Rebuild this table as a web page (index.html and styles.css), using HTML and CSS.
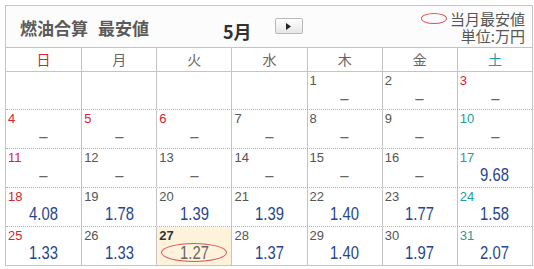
FILE: index.html
```html
<!DOCTYPE html>
<html lang="ja">
<head>
<meta charset="utf-8">
<link rel="stylesheet" href="styles.css">
</head>
<body>
<div class="cal">
  <div class="head">
    <div class="title">燃油合算<span class="gap"></span>最安値</div>
    <div class="month">5月</div>
    <div class="next"><svg width="5" height="7" viewBox="0 0 5 7"><path d="M0 0L5 3.5L0 7Z" fill="#222"/></svg></div>
    <div class="legend">
      <div class="l1"><span class="oval"></span>当月最安値</div>
      <div class="l2">単位:万円</div>
    </div>
  </div>
  <div class="names">
    <div class="sun">日</div><div>月</div><div>火</div><div>水</div><div>木</div><div>金</div><div class="sat">土</div>
  </div>
  <div class="week">
    <div class="cell"></div><div class="cell"></div><div class="cell"></div><div class="cell"></div>
    <div class="cell"><span class="d">1</span><span class="v dash">–</span></div>
    <div class="cell"><span class="d">2</span><span class="v dash">–</span></div>
    <div class="cell"><span class="d red">3</span><span class="v dash">–</span></div>
  </div>
  <div class="week">
    <div class="cell"><span class="d red">4</span><span class="v dash">–</span></div>
    <div class="cell"><span class="d red">5</span><span class="v dash">–</span></div>
    <div class="cell"><span class="d red">6</span><span class="v dash">–</span></div>
    <div class="cell"><span class="d">7</span><span class="v dash">–</span></div>
    <div class="cell"><span class="d">8</span><span class="v dash">–</span></div>
    <div class="cell"><span class="d">9</span><span class="v dash">–</span></div>
    <div class="cell"><span class="d teal">10</span><span class="v dash">–</span></div>
  </div>
  <div class="week">
    <div class="cell"><span class="d red">11</span><span class="v dash">–</span></div>
    <div class="cell"><span class="d">12</span><span class="v dash">–</span></div>
    <div class="cell"><span class="d">13</span><span class="v dash">–</span></div>
    <div class="cell"><span class="d">14</span><span class="v dash">–</span></div>
    <div class="cell"><span class="d">15</span><span class="v dash">–</span></div>
    <div class="cell"><span class="d">16</span><span class="v dash">–</span></div>
    <div class="cell"><span class="d teal">17</span><span class="v">9.68</span></div>
  </div>
  <div class="week">
    <div class="cell"><span class="d red">18</span><span class="v">4.08</span></div>
    <div class="cell"><span class="d">19</span><span class="v">1.78</span></div>
    <div class="cell"><span class="d">20</span><span class="v">1.39</span></div>
    <div class="cell"><span class="d">21</span><span class="v">1.39</span></div>
    <div class="cell"><span class="d">22</span><span class="v">1.40</span></div>
    <div class="cell"><span class="d">23</span><span class="v">1.77</span></div>
    <div class="cell"><span class="d teal">24</span><span class="v">1.58</span></div>
  </div>
  <div class="week">
    <div class="cell"><span class="d red">25</span><span class="v">1.33</span></div>
    <div class="cell"><span class="d">26</span><span class="v">1.33</span></div>
    <div class="cell today"><span class="d">27</span><span class="best"><span class="v">1.27</span></span></div>
    <div class="cell"><span class="d">28</span><span class="v">1.37</span></div>
    <div class="cell"><span class="d">29</span><span class="v">1.40</span></div>
    <div class="cell"><span class="d">30</span><span class="v">1.97</span></div>
    <div class="cell"><span class="d teal">31</span><span class="v">2.07</span></div>
  </div>
</div>
</body>
</html>
```

FILE: styles.css
```css
html, body {
  margin: 0;
  background: #fff;
}
body {
  font-family: "Noto Sans CJK JP", "Noto Sans", sans-serif;
  color: #555;
}
.cal {
  margin: 5px 0 0 5px;
  width: 528px;
  box-sizing: border-box;
  border: 1px solid #c4c4c4;
}
.head {
  height: 41px;
  display: flex;
  align-items: flex-start;
  border-bottom: 1px solid #c4c4c4;
  background: #fcfcfc;
}
.title {
  margin: 11px 0 0 14px;
  width: 203px;
  font-size: 17px;
  line-height: 22px;
  font-weight: bold;
  color: #5a5a5a;
}
.gap {
  display: inline-block;
  width: 10px;
}
.month {
  margin-top: 14px;
  font-size: 18px;
  line-height: 22px;
  font-weight: bold;
  color: #333;
}
.next {
  margin: 12px 0 0 23px;
  width: 26px;
  height: 14px;
  border: 1px solid #b8b8b8;
  border-radius: 2px;
  background: linear-gradient(#fff, #e6e6e6);
  display: flex;
  align-items: center;
  justify-content: center;
}
.legend {
  margin: 4px 7px 0 auto;
  font-size: 15px;
  line-height: 17px;
  text-align: right;
  color: #555;
}
.l1 {
  display: flex;
  align-items: center;
  height: 17px;
}
.l2 {
  height: 17px;
}
.oval {
  width: 24px;
  height: 9px;
  border: 1.5px solid #e0505a;
  border-radius: 50%;
  margin-right: 3px;
}
.names {
  display: grid;
  grid-template-columns: repeat(7, 1fr);
  height: 23px;
  border-bottom: 1px solid #c4c4c4;
}
.names > div {
  font-size: 14px;
  line-height: 23px;
  text-align: center;
  color: #666;
  border-left: 1px solid #c4c4c4;
}
.names > div:first-child { border-left: none; }
.names .sun { color: #e0202a; }
.names .sat { color: #1a9e9e; }
.week {
  display: grid;
  grid-template-columns: repeat(7, 1fr);
  height: 38px;
  border-top: 1px dotted #b0b0b0;
}
.names + .week { border-top: none; height: 37px; }
.cell {
  border-left: 1px solid #c4c4c4;
  display: flex;
  flex-direction: column;
  padding: 2px 0 0 2px;
}
.cell:first-child { border-left: none; }
.today { background: #fdf3da; }
.d {
  font-family: "Liberation Sans", sans-serif;
  font-size: 13px;
  line-height: 14px;
  color: #555;
}
.today .d { font-weight: bold; color: #333; }
.d.red { color: #e0202a; }
.d.teal { color: #1a9e9e; }
.v {
  display: inline-block;
  align-self: center;
  margin-left: -2px;
  font-family: "Liberation Sans", sans-serif;
  font-size: 19px;
  line-height: 20px;
  color: #26458f;
  transform: scaleX(0.78);
}
.v.dash { color: #666; }
.best {
  align-self: center;
  margin-left: -2px;
  width: 64px;
  height: 17px;
  border: 1.5px solid #e0505a;
  border-radius: 50%;
  display: flex;
  justify-content: center;
  align-items: center;
}
.best .v {
  margin: 0;
  color: #666;
  line-height: 17px;
}
```
